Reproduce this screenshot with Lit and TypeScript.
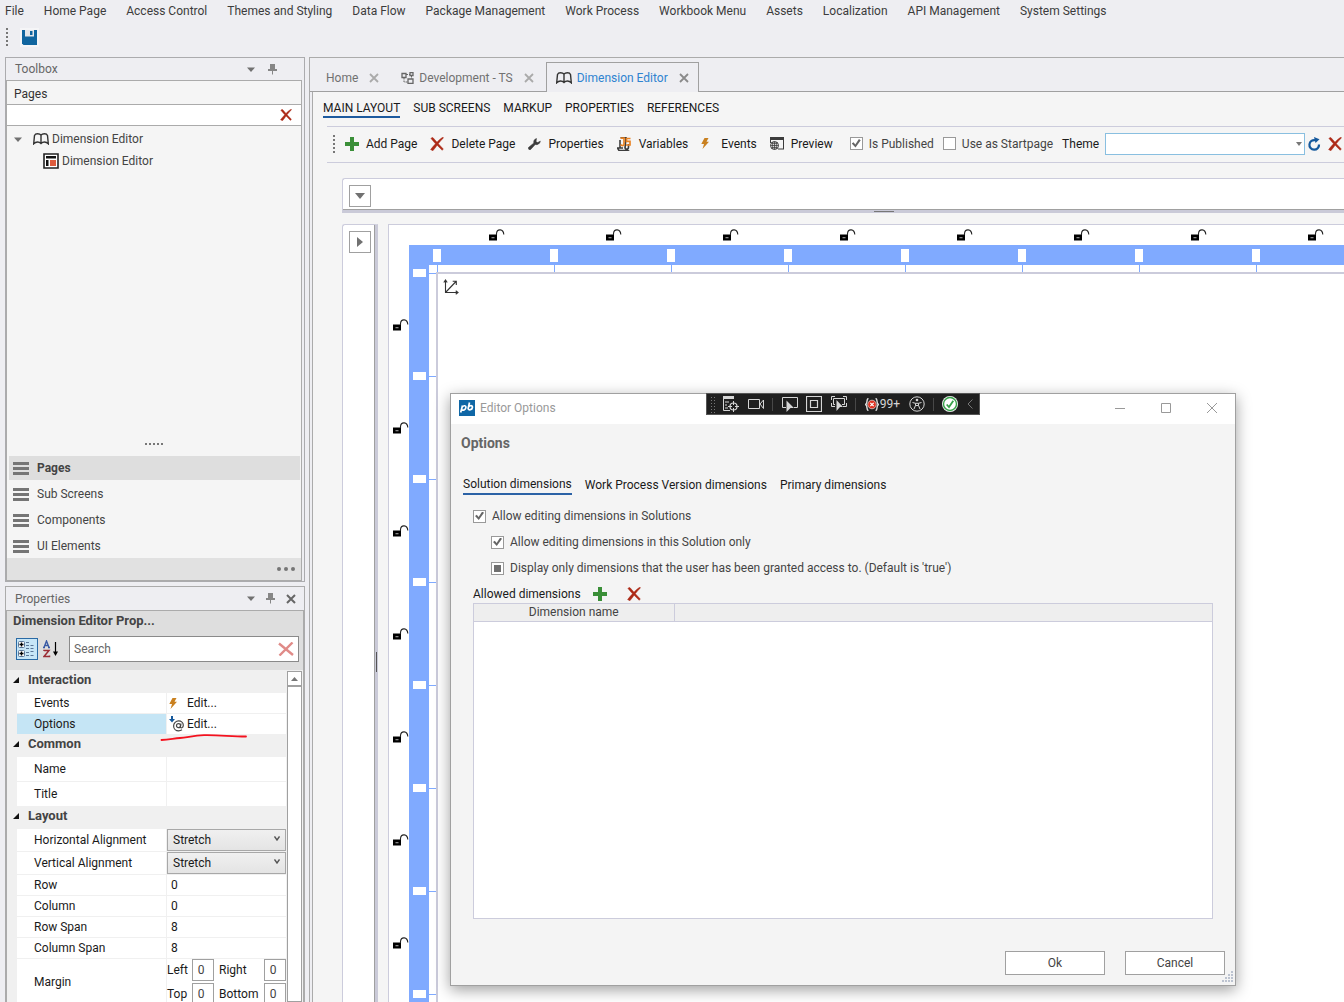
import { LitElement, html, css, svg, TemplateResult } from "lit";
import { customElement, state } from "lit/decorators.js";
import { classMap } from "lit/directives/class-map.js";

const icon = (w: number, h: number, body: TemplateResult | TemplateResult[]) =>
  html`<svg width=${w} height=${h} viewBox="0 0 ${w} ${h}" aria-hidden="true">${body}</svg>`;

const icons = {
  save: () => icon(15, 15, svg`<path d="M0 0H15V15H1.5L0 13.5Z" fill="#10659f"/><path d="M3 0H12V6.5H3Z" fill="#e3e6ea"/><path d="M8 1H10.500V5H8Z" fill="#10659f"/>`),
  caret: () => icon(8, 5, svg`<path d="M0 0.500H8L4 5Z" fill="#717171"/>`),
  pin: () => icon(9, 11, svg`<path d="M2 0H7V5H9V7H5V10.500H4V7H0V5H2Z" fill="#868686"/>`),
  cross: () => icon(10, 10, svg`<path d="M1 1L9 9M9 1L1 9" stroke="#666" stroke-width="2"/>`),
  tabCross: (c: string) => icon(10, 10, svg`<path d="M1 1L9 9M9 1L1 9" stroke=${c} stroke-width="1.800"/>`),
  red: (s: number) => html`<svg width=${s} height=${s} viewBox="0 0 14 14" aria-hidden="true"><path d="M1 1.500C1.500 0.500 2.700 0.300 3.300 1L7 5.200C9 3 11 1.200 13 0.300L13.500 0.900C11.500 2.700 9.700 4.600 8.300 6.700L13.300 12L12.200 13.300L7.100 8.200C5.800 10.100 4.400 12 2.900 13.700L0.600 12.600C2.200 10.500 3.800 8.600 5.500 6.800Z" fill="#ad2a17" stroke="#ad2a17" stroke-width="0.500"/></svg>`,
  pale: () => icon(16, 14, svg`<path d="M1 1.500L15 13M14.500 0.500L1.500 13.500" stroke="#e08b88" stroke-width="2.400"/>`),
  plus: () => icon(14, 14, svg`<path d="M5 0H9V5H14V9H9V14H5V9H0V5H5Z" fill="#3a8f38"/>`),
  book: (c = "#333") => icon(16, 12, svg`<path d="M8 10.500V2.200C7.200 1 5.800 0.700 4.500 0.700S2 1.200 1.500 2.400L0.700 10.800C1.800 9.600 3 9 4.500 9S7.200 9.600 8 10.500C8.800 9.600 10 9 11.500 9S14.200 9.600 15.300 10.800L14.500 2.400C14 1.200 12.800 0.700 11.500 0.700S8.800 1 8 2.200" fill="none" stroke=${c} stroke-width="1.400"/>`),
  page: () => icon(16, 16, svg`<path d="M1 1H15V15H1Z" fill="#fff" stroke="#222" stroke-width="1.600"/><path d="M3 3H13V5.500H3ZM3 7H5.500V13H3Z" fill="#111"/><path d="M7 7H13V13H7Z" fill="#dd5b3c"/>`),
  bars: () => icon(16, 13, svg`<path d="M0 0H16V3H0ZM0 5H16V8H0ZM0 10H16V13H0Z" fill="#757575"/>`),
  bolt: () => icon(8, 11, svg`<path d="M3.500 0H7.500L5.500 3.700H8L1.500 11L3 6H0.300Z" fill="#c9801f"/>`),
  flow: () => icon(13, 12, svg`<path d="M1 1.500H5V5.500H1ZM7 7H12V11.300H7ZM9 0.700H12V3.500H9Z" fill="none" stroke="#666" stroke-width="1.300"/><path d="M5 2.500H9M3 5.500V10H7M10.500 3.500V7" fill="none" stroke="#666" stroke-dasharray="2 1"/>`),
  wrench: () => icon(13, 12, svg`<path d="M8.500 0.600C6.500 1 5.300 3 5.900 5L0.500 9.500C-0.200 10.800 1.300 12.300 2.600 11.500L7.200 6.500C9.500 7.200 12 5.600 12.300 3.200L9.700 4.600L8 3.800L8.200 2Z" fill="#3c3c3c" stroke="#3c3c3c" stroke-width="0.600"/>`),
  js: () => icon(15, 14, svg`<path d="M3.500 0.500H9L8 11L11 13.500H2L0.500 11H6M3 3V11M8 10C8 13 11.500 13 11.500 10V7" fill="none" stroke="#3c3c3c" stroke-width="1.600"/><path d="M3.500 1.200H7V7.500C6.500 9 4.500 8.700 3.500 7.700M13.500 1.500H9.500V4.400H13V8H9" fill="none" stroke="#e98324" stroke-width="1.700"/>`),
  preview: () => icon(14, 13, svg`<path d="M0 0H14V12.500H8V11.500H13V3H1V6H0Z" fill="#3c3c3c"/><circle cx="4.500" cy="8.500" r="4" fill="#f5f5f5" stroke="#3c3c3c"/><path d="M0.500 8.500H8.500M4.500 4.500V12.500M1.500 6.300H7.500M1.500 10.600H7.500M2.700 5V12M6.300 5V12" stroke="#3c3c3c" stroke-width="0.800"/>`),
  refresh: () => icon(13, 14, svg`<path d="M11 7.500A4.800 4.800 0 1 1 7.300 3.200" fill="none" stroke="#15599c" stroke-width="2.200"/><path d="M6 0L11.500 2.200L7.500 6Z" fill="#15599c"/>`),
  lock: () => icon(16, 12, svg`<path d="M0 5.500H8V11.500H0Z" fill="#000"/><path d="M2.500 8H5.500V9.300H2.500Z" fill="#888"/><path d="M7.500 6V4.500C8 -0.500 14.500 -0.500 14.800 5.500" fill="none" stroke="#222" stroke-width="1.100"/>`),
  axes: () => icon(16, 16, svg`<path d="M2.500 1V13.500H15M2.500 13.500L13 2.500M0.800 3.500L2.500 1L4.200 3.500M12.700 11.700L15 13.500L12.700 15.200M9.700 2.300H13.300V6" fill="none" stroke="#333" stroke-width="1.100"/>`),
  at: () => html`<svg width="16" height="16" viewBox="0 0 16 16" aria-hidden="true"><path d="M2 0H4V3H6L3 6.500L0 3H2Z" fill="#15599c"/><circle cx="9.500" cy="9.700" r="2" fill="none" stroke="#444" stroke-width="1.200"/><path d="M12 7.500L11.400 11C11.500 12.600 14.300 12 14.300 9.300C14.300 6.700 12.200 4.900 9.600 4.900S4.600 7 4.600 9.900S7 14.800 9.700 14.800C11 14.800 12 14.400 13 13.800" fill="none" stroke="#444" stroke-width="1.200"/></svg>`,
  category: () => icon(18, 16, svg`<rect x="0.500" y="0.500" width="6" height="6" rx="1" fill="#fff" stroke="#5b7697"/><rect x="0.500" y="9.500" width="6" height="6" rx="1" fill="#fff" stroke="#5b7697"/><path d="M3.500 1.500V5.500M1.500 3.500H5.500M3.500 10.500V14.500M1.500 12.500H5.500" stroke="#000" stroke-width="1.400"/><path d="M8 1.500H11M8 4.500H11M8 7.500H11M8 11.500H11M8 14.500H11M12.500 4.500H15.500M12.500 7.500H15.500M12.500 10.500H15.500M12.500 14.500H15.500" stroke="#5b7697"/>`),
  sort: () => icon(16, 18, svg`<path d="M1 7.500L3.500 1L6 7.500M1.800 5.500H5.200M0 7.500H2M5 7.500H7" fill="none" stroke="#3a5ba5" stroke-width="1.400"/><path d="M1 11V10.500H6L1 16.500H6.500V15.500" fill="none" stroke="#9b2d35" stroke-width="1.500"/><path d="M12.500 2V14" stroke="#000" stroke-width="1.200"/><path d="M10 11.500H15L12.500 16Z"/>`),
  logo: () => icon(16, 16, svg`<path d="M0 0H16V16H0Z" fill="#0f67a6"/><path d="M1.700 12.500L3.500 5.500M3.200 7C4.800 5 7.300 5.500 6.900 7.700C6.500 10 4 10.800 2.600 9.500M10.500 2.500L9 9M9.300 7.500C10.500 5 13.800 5 13.400 7.500C13 10 10 10.300 9 9" fill="none" stroke="#fff" stroke-width="1.700"/>`),
};

const MENU = ["File", "Home Page", "Access Control", "Themes and Styling", "Data Flow", "Package Management", "Work Process",
  "Workbook Menu", "Assets", "Localization", "API Management", "System Settings"];
const VIEWS = ["MAIN LAYOUT", "SUB SCREENS", "MARKUP", "PROPERTIES", "REFERENCES"];
const GROUPS = ["Pages", "Sub Screens", "Components", "UI Elements"];
const DIALOG_TABS = ["Solution dimensions", "Work Process Version dimensions", "Primary dimensions"];
const COLUMNS = Array.from({ length: 8 }, (_, i) => i);
const ROWS = Array.from({ length: 8 }, (_, i) => i);

const base = css`
  *, *::before, *::after { box-sizing: border-box; }
  button, input, select { font: inherit; color: inherit; margin: 0; padding: 0; border: 0; background: none; border-radius: 0; }
  button { display: inline-flex; align-items: center; cursor: default; white-space: nowrap; }
  a { color: inherit; text-decoration: none; white-space: nowrap; }
  svg { display: block; flex: none; }
  h2, h3 { margin: 0; font-size: 13px; font-weight: 700; }
  input:focus, select:focus { outline: none; }
  .check { display: flex; align-items: center; gap: 6px; color: #444; white-space: nowrap; }
  .check input { appearance: none; flex: none; width: 13px; height: 13px; border: 1px solid #999; background: #fff; display: grid; place-items: center; }
  .check input:checked::before { content: ""; width: 9px; height: 9px; background: #666; clip-path: polygon(0 50%, 20% 35%, 40% 60%, 80% 0, 100% 15%, 42% 95%); }
  .check input:indeterminate::before { content: ""; width: 7px; height: 7px; background: #707070; }
  .grip { flex: none; width: 2px; background: repeating-linear-gradient(#777 0 2px, transparent 2px 4px); }
`;

@customElement("toolbox-panel")
class ToolboxPanel extends LitElement {
  @state() private active = "Pages";

  static styles = [base, css`
    :host { display: flex; flex-direction: column; border: 1px solid #ababae; height: 525px; padding-right: 2px; background: #eeeef2; }
    .head { display: flex; align-items: center; height: 22px; padding: 0 25px 0 9px; gap: 13px; color: #666; }
    .head span { flex: 1; }
    .body { flex: 1; display: flex; flex-direction: column; border: 1px solid #ababab; background: #f5f5f5; }
    .title { height: 24px; padding: 0 7px; line-height: 26px; border-bottom: 1px solid #ababab; color: #333; }
    .find { display: flex; align-items: center; height: 21px; background: #fff; border-bottom: 1px solid #ababab; padding-right: 9px; }
    .find input { flex: 1; min-width: 0; height: 100%; padding: 0 6px; }
    .tree { flex: 1; padding: 2px 0 0 7px; color: #444; }
    .node { display: flex; align-items: center; height: 22px; gap: 3px; }
    .node button { width: 16px; height: 16px; }
    .child { padding-left: 29px; }
    .dots { align-self: center; height: 2px; width: 18px; margin-bottom: 11px; background: repeating-linear-gradient(90deg, #777 0 2px, transparent 2px 4px); }
    .groups { display: flex; flex-direction: column; gap: 2px; padding: 0 1px 0 2px; }
    .group { height: 24px; gap: 8px; padding-left: 4px; color: #444; }
    .group.on { background: #dedede; font-weight: 700; }
    .foot { height: 22px; background: #e1e1e1; display: flex; justify-content: flex-end; align-items: center; padding-right: 6px; }
  `];

  render() {
    return html`
      <div class="head"><span>Toolbox</span><button aria-label="Toolbox options">${icons.caret()}</button><button aria-label="Pin toolbox">${icons.pin()}</button></div>
      <div class="body">
        <label class="title" for="find">Pages</label>
        <div class="find"><input id="find" type="text"><button aria-label="Clear filter">${icons.red(12)}</button></div>
        <div class="tree">
          <div class="node"><button aria-label="Collapse">${icons.caret()}</button>${icons.book()}<span>Dimension Editor</span></div>
          <div class="node child">${icons.page()}<span>Dimension Editor</span></div>
        </div>
        <div class="dots"></div>
        <div class="groups">
          ${GROUPS.map((g) => html`<button class=${classMap({ group: true, on: g === this.active })} @click=${() => (this.active = g)}>${icons.bars()}${g}</button>`)}
        </div>
        <div class="foot"><button aria-label="More">${icon(18, 4, svg`<circle cx="2" cy="2" r="2" fill="#757575"/><circle cx="9" cy="2" r="2" fill="#757575"/><circle cx="16" cy="2" r="2" fill="#757575"/>`)}</button></div>
      </div>`;
  }
}

@customElement("property-panel")
class PropertyPanel extends LitElement {
  static styles = [base, css`
    :host { display: flex; flex-direction: column; flex: 1; min-height: 0; overflow: hidden; border: 1px solid #ababab; border-bottom: 0; background: #eeeef2; color: #1a1a1a; }
    .head { flex: none; display: flex; align-items: center; height: 23px; padding: 0 8px 0 9px; gap: 11px; color: #666; }
    .head span { flex: 1; }
    .body { flex: 1; min-height: 0; border: 1px solid #ababab; border-bottom: 0; background: #dedede; display: flex; flex-direction: column; overflow: hidden; }
    h2 { flex: none; height: 22px; line-height: 20px; padding-left: 6px; color: #444; }
    .tools { flex: none; display: flex; align-items: center; height: 37px; padding: 0 4px 5px 9px; gap: 2px; }
    .mode { width: 22px; height: 22px; justify-content: center; }
    .mode.on { border: 1px solid #2a6aa5; background: #c7e6f7; }
    .search { flex: 1; display: flex; align-items: center; height: 26px; margin-left: 5px; background: #fff; border: 1px solid #8a8a8a; padding: 0 4px; }
    .search input { flex: 1; min-width: 0; }
    .search input::placeholder { color: #666; opacity: 1; }
    .view { flex: 1; display: flex; min-height: 0; background: #f0f0f0; overflow: hidden; }
    .grid { flex: 1; min-width: 0; }
    h3 { display: flex; align-items: center; height: 23px; gap: 9px; padding: 0 0 4px 6px; color: #444; }
    .rows { display: flex; flex-direction: column; gap: 1px; padding-left: 10px; }
    .row { display: grid; grid-template-columns: 149px 1fr; gap: 1px; min-height: 20px; }
    .row.tall { min-height: 24px; }
    .row.pick { min-height: 22px; }
    .row > label, .row > .name { background: #fff; padding-left: 17px; display: flex; align-items: center; }
    .row.on > .name { background: #c5e5f5; }
    .cell { background: #fff; display: flex; align-items: center; min-width: 0; }
    .cell > input { width: 100%; height: 100%; padding-left: 4px; }
    .edit { gap: 10px; padding-left: 2px; height: 100%; }
    .edit.near { gap: 2px; }
    .pick .cell { display: grid; align-items: center; }
    select { appearance: none; grid-area: 1/1; width: 100%; height: 22px; padding-left: 5px; border: 1px solid #a8a8a8; background: linear-gradient(#f0f0f0, #e4e4e4); }
    .pick svg { grid-area: 1/1; justify-self: end; margin: 0 6px 4px 0; pointer-events: none; }
    .margins { background: #fff; display: grid; grid-template-columns: 25px 22px 50px 22px; row-gap: 2px; align-items: center; }
    .margins input { width: 22px; height: 22px; text-align: center; border: 1px solid #a0a0a0; color: #444; padding-right: 4px; }
    .margins label:nth-of-type(even) { padding-left: 5px; }
    .bar { flex: none; width: 15px; margin: 1px 1px 0 1px; display: flex; flex-direction: column; }
    .bar button { height: 15px; border: 1px solid #a0a0a0; background: #fff; justify-content: center; }
    .bar div { flex: 1; border: 1px solid #a0a0a0; background: #fff; }
  `];

  private section(title: string, body: TemplateResult | TemplateResult[]) {
    return html`<h3>${icon(6, 6, svg`<path d="M6 0V6H0Z" fill="#111"/>`)}${title}</h3><div class="rows">${body}</div>`;
  }

  private text(name: string, value: string, tall = false) {
    const id = name.replace(" ", "-");
    return html`<div class=${classMap({ row: true, tall })}><label for=${id}>${name}</label><div class="cell"><input id=${id} type="text" .value=${value}></div></div>`;
  }

  private pick(name: string) {
    const id = name.replace(" ", "-");
    return html`<div class="row pick"><label for=${id}>${name}</label><div class="cell"><select id=${id}><option>Stretch</option><option>Left</option><option>Center</option></select>${icon(6, 5, svg`<path d="M0.500 0.500L3 4L5.500 0.500" fill="none" stroke="#555" stroke-width="1.400"/>`)}</div></div>`;
  }

  render() {
    return html`
      <div class="head"><span>Properties</span><button aria-label="Properties options">${icons.caret()}</button><button aria-label="Pin properties">${icons.pin()}</button><button aria-label="Close properties">${icons.cross()}</button></div>
      <div class="body">
        <h2>Dimension Editor Prop...</h2>
        <div class="tools">
          <button class="mode on" aria-label="Group by category">${icons.category()}</button>
          <button class="mode" aria-label="Sort by name">${icons.sort()}</button>
          <div class="search"><input type="text" aria-label="Search" placeholder="Search"><button aria-label="Clear search">${icons.pale()}</button></div>
        </div>
        <div class="view">
          <div class="grid">
            ${this.section("Interaction", html`
              <div class="row"><span class="name">Events</span><div class="cell"><button class="edit">${icons.bolt()}Edit...</button></div></div>
              <div class="row on"><span class="name">Options</span><div class="cell"><button class="edit near">${icons.at()}Edit...</button></div></div>`)}
            ${this.section("Common", [this.text("Name", "", true), this.text("Title", "", true)])}
            ${this.section("Layout", html`
              ${this.pick("Horizontal Alignment")}${this.pick("Vertical Alignment")}
              ${this.text("Row", "0")}${this.text("Column", "0")}${this.text("Row Span", "8")}${this.text("Column Span", "8")}
              <div class="row"><span class="name">Margin</span><div class="margins">
                ${["Left", "Right", "Top", "Bottom"].map((m) => html`<label for=${m}>${m}</label><input id=${m} type="text" .value=${"0"}>`)}
              </div></div>`)}
          </div>
          <div class="bar"><button aria-label="Scroll up">${icon(7, 4, svg`<path d="M0 4L3.500 0L7 4Z" fill="#777"/>`)}</button><div></div></div>
        </div>
      </div>`;
  }
}

@customElement("layout-document")
class LayoutDocument extends LitElement {
  @state() private view = VIEWS[0];

  static styles = [base, css`
    :host { display: flex; flex-direction: column; min-width: 0; min-height: 0; overflow: hidden; border: 1px solid #ababab; border-right: 0; border-bottom: 0; color: #1a1a1a; }
    .tabs { flex: none; display: flex; align-items: flex-end; height: 34px; padding-left: 4px; border-bottom: 1px solid #a0a0a0; }
    .tab { display: flex; align-items: center; height: 30px; color: #717171; gap: 5px; padding: 0 11px 0 11px; border: 1px solid transparent; border-bottom: 0; margin-bottom: -1px; white-space: nowrap; }
    .tab + .tab { padding-left: 9px; }
    .tab button { margin-left: 6px; }
    .tab.on { border-color: #a0a0a0; background: #eeeef2; color: #2f83d0; padding: 0 9px; }
    .page { flex: 1; min-height: 0; display: flex; flex-direction: column; margin-left: 2px; border-left: 1px solid #ababab; background: #f5f5f5; }
    .views { flex: none; display: flex; gap: 13px; padding: 8px 0 8px 10px; }
    .views a { height: 18px; line-height: 16px; }
    .views a.on { border-bottom: 2px solid #1d5a9e; }
    .bar { flex: none; display: flex; align-items: center; height: 37px; margin-left: 14px; padding: 0 0 2px 6px; border: 1px solid #ccccdc; border-width: 1px 0; white-space: nowrap; }
    .bar button { gap: 7px; margin-right: 13px; }
    .bar .events { gap: 12px; }
    .bar .grip { height: 18px; margin-right: 10px; }
    .bar .check { margin-right: 9px; }
    .bar .preview { margin-right: 17px; }
    .combo { display: grid; align-items: center; flex: none; width: 200px; height: 22px; margin: 0 3px 0 6px; }
    .combo select { grid-area: 1/1; appearance: none; width: 100%; height: 22px; border: 1px solid #89bfe0; background: #fff; }
    .combo svg { grid-area: 1/1; justify-self: end; margin-right: 3px; pointer-events: none; }
    .bar .combo ~ button { margin-right: 7px; }
    .stage { flex: 1; min-height: 0; display: grid; grid-template-columns: 36px 1fr; grid-template-rows: 35px 1fr; gap: 11px 10px; padding: 15px 0 0 29px; }
    .top { grid-column: 1 / -1; background: #fff; border: 1px solid #ccccdc; border-right: 0; border-bottom: 3px solid #cacad8; box-shadow: inset 0 -1px #a0a0a0; border-top-left-radius: 3px; padding: 6px; position: relative; }
    .side { background: #fff; border: 1px solid #ccccdc; border-bottom: 0; border-right: 3px solid #cacad8; box-shadow: inset -1px 0 #a0a0a0; border-top-left-radius: 3px; padding: 6px; position: relative; }
    .fold { width: 22px; height: 22px; border: 1px solid #a0a0a0; background: #fff; justify-content: center; }
    .top::after { content: ""; position: absolute; left: 53%; bottom: -2px; width: 20px; height: 1px; background: #777; }
    .side::after { content: ""; position: absolute; top: 55%; right: -2px; width: 1px; height: 20px; background: #555; }
    .canvas { min-width: 0; min-height: 0; overflow: hidden; background: #fff; border: 1px solid #ccccdc; border-right: 0; border-bottom: 0; display: grid; grid-template-columns: 20px 20px 7px 1fr; grid-template-rows: 20px 20px 7px 1fr; }
    .canvas > div { min-width: 0; min-height: 0; overflow: hidden; }
    .locks-x { grid-area: 1 / 4; display: flex; align-items: center; padding-left: 2px; }
    .locks-x span { flex: none; width: 117px; display: flex; justify-content: center; }
    .locks-y { grid-area: 4 / 1; display: flex; flex-direction: column; padding-top: 1px; }
    .locks-y span { flex: none; height: 103px; display: flex; align-items: center; justify-content: flex-end; }
    .band-x { grid-area: 2 / 2 / auto / 5; background: #80aaff; display: flex; align-items: center; padding-left: 24px; }
    .band-x i { flex: none; width: 8px; height: 13px; background: #fff; margin-right: 109px; }
    .band-y { grid-area: 3 / 2 / 5 / auto; background: #80aaff; display: flex; flex-direction: column; align-items: center; padding-top: 4px; }
    .band-y i { flex: none; width: 13px; height: 8px; background: #fff; margin-bottom: 95px; }
    .ruler-x { grid-area: 3 / 4; background: repeating-linear-gradient(90deg, #80aaff 0 1px, transparent 1px 117px); margin-left: 1px; }
    .ruler-y { grid-area: 4 / 3; background: repeating-linear-gradient(#80aaff 0 1px, transparent 1px 103px); margin-top: 1px; }
    .surface { grid-area: 4 / 4; border: 2px solid #cbcbdb; border-right: 0; border-bottom: 0; padding: 5px; }
  `];

  render() {
    return html`
      <div class="tabs">
        <div class="tab"><a href="#home">Home</a><button aria-label="Close Home">${icons.tabCross("#aaa")}</button></div>
        <div class="tab">${icons.flow()}<a href="#development">Development - TS</a><button aria-label="Close Development - TS">${icons.tabCross("#aaa")}</button></div>
        <div class="tab on">${icons.book()}<a href="#editor">Dimension Editor</a><button aria-label="Close Dimension Editor">${icons.tabCross("#8a8a8a")}</button></div>
      </div>
      <div class="page">
        <nav class="views">${VIEWS.map((v) => html`<a href="#" class=${v === this.view ? "on" : ""} @click=${(e: Event) => { e.preventDefault(); this.view = v; }}>${v}</a>`)}</nav>
        <div class="bar">
          <span class="grip"></span>
          <button>${icons.plus()}Add Page</button>
          <button>${icons.red(14)}Delete Page</button>
          <button>${icons.wrench()}Properties</button>
          <button>${icons.js()}Variables</button>
          <button class="events">${icons.bolt()}Events</button>
          <button class="preview">${icons.preview()}Preview</button>
          <label class="check"><input type="checkbox" checked>Is Published</label>
          <label class="check"><input type="checkbox">Use as Startpage</label>
          <label for="theme">Theme</label>
          <div class="combo"><select id="theme"><option></option></select>${icon(6, 4, svg`<path d="M0 0H6L3 4Z" fill="#777"/>`)}</div>
          <button aria-label="Refresh themes">${icons.refresh()}</button>
          <button aria-label="Clear theme">${icons.red(14)}</button>
        </div>
        <div class="stage">
          <div class="top"><button class="fold" aria-label="Expand top panel">${icon(10, 6, svg`<path d="M0 0H10L5 6Z" fill="#717171"/>`)}</button></div>
          <div class="side"><button class="fold" aria-label="Expand side panel">${icon(6, 10, svg`<path d="M0 0V10L6 5Z" fill="#717171"/>`)}</button></div>
          <div class="canvas">
            <div class="locks-x">${COLUMNS.map(() => html`<span>${icons.lock()}</span>`)}</div>
            <div class="band-x">${COLUMNS.map(() => html`<i></i>`)}</div>
            <div class="ruler-x"></div>
            <div class="locks-y">${ROWS.map(() => html`<span>${icons.lock()}</span>`)}</div>
            <div class="band-y">${ROWS.map(() => html`<i></i>`)}</div>
            <div class="ruler-y"></div>
            <div class="surface">${icons.axes()}</div>
          </div>
        </div>
      </div>`;
  }
}

@customElement("debug-strip")
class DebugStrip extends LitElement {
  static styles = [base, css`
    :host { display: flex; align-items: center; justify-content: space-between; height: 22px; padding: 0 6px 0 3px; background: #1f1f1f; border: 1px solid #555; color: #d6d6d6; }
    .grab { width: 5px; height: 17px; background: radial-gradient(circle, #777 0 1px, transparent 1px) 0 0 / 3px 3px; }
    i { width: 1px; height: 13px; background: #484848; }
    .errors { gap: 1px; }
  `];

  render() {
    return html`
      <span class="grab"></span>
      <button aria-label="Live visual tree">${icon(16, 16, svg`<path d="M0 0H11V3H0Z" fill="#d6d6d6"/><path d="M0.500 3V14.500H7M2 6H6M2 9H4M2 12H5" stroke="#d6d6d6" fill="none"/><circle cx="10.500" cy="10.500" r="3.500" fill="none" stroke="#d6d6d6" stroke-width="1.200"/><path d="M10.500 5V9M10.500 12V16M5 10.500H9M12 10.500H16" stroke="#d6d6d6"/>`)}</button>
      <button aria-label="Record">${icon(16, 10, svg`<path d="M0.500 0.500H11.500V9.500H0.500ZM12 5L15.500 1V9.500Z" fill="none" stroke="#d6d6d6"/>`)}</button>
      <i></i>
      <button aria-label="Select element">${icon(16, 15, svg`<path d="M4 10.500H0.500V0.500H15.500V10.500H12" fill="none" stroke="#d6d6d6"/><path d="M4.500 3.500L12 11H8.500L4.500 15Z" fill="#d6d6d6"/>`)}</button>
      <button aria-label="Show adorners">${icon(16, 16, svg`<path d="M0.500 0.500H15.500V15.500H0.500ZM4.500 4.500H11.500V11.500H4.500Z" fill="none" stroke="#d6d6d6" stroke-width="1.200"/>`)}</button>
      <button aria-label="Track focus">${icon(16, 16, svg`<path d="M0.500 4V0.500H4M12 0.500H15.500V4M15.500 7V10.500H12M4 10.500H0.500V7M4 8.500H2.500V2.500H13.500V8.500H11" fill="none" stroke="#d6d6d6"/><path d="M5.500 4L12 11H9L5.500 15Z" fill="#d6d6d6"/>`)}</button>
      <i></i>
      <button class="errors" aria-label="Binding failures">${icon(14, 13, svg`<path d="M3.500 0.500C1 0.500 3 5.500 0.500 6.500C3 7.500 1 12.500 3.500 12.500M10.500 0.500C13 0.500 11 5.500 13.500 6.500C11 7.500 13 12.500 10.500 12.500" fill="none" stroke="#ddd" stroke-width="1.400"/><circle cx="7" cy="6.500" r="4.300" fill="#e03424" stroke="#fff" stroke-width="0.600"/><path d="M5.300 4.800L8.700 8.200M8.700 4.800L5.300 8.200" stroke="#fff" stroke-width="1.200"/>`)}99+</button>
      <button aria-label="Accessibility">${icon(16, 16, svg`<circle cx="8" cy="8" r="7.200" fill="none" stroke="#d6d6d6"/><circle cx="8" cy="4" r="1.300" fill="#d6d6d6"/><path d="M3.500 6.500L6.500 7.300V9.500L5 13M12.500 6.500L9.500 7.300V9.500L11 13M6.500 7.300H9.500M6.500 9.500H9.500" fill="none" stroke="#d6d6d6"/>`)}</button>
      <i></i>
      <button aria-label="Hot reload">${icon(16, 16, svg`<circle cx="8" cy="8" r="8" fill="#f4f4f4"/><circle cx="8" cy="8" r="6.500" fill="#fff" stroke="#37a24a" stroke-width="1.400"/><path d="M4.700 8.500L7 11L11.300 4.700" fill="none" stroke="#37a24a" stroke-width="1.800"/>`)}</button>
      <button aria-label="Collapse toolbar">${icon(6, 10, svg`<path d="M5.500 0.500L1 5L5.500 9.500" fill="none" stroke="#777"/>`)}</button>`;
  }
}

@customElement("options-dialog")
class OptionsDialog extends LitElement {
  @state() private tab = DIALOG_TABS[0];

  static styles = [base, css`
    :host { display: flex; flex-direction: column; background: #f4f4f4; border: 1px solid #a0a0a0; box-shadow: 0 4px 14px rgb(0 0 0 / 38%); color: #1a1a1a; }
    .title { display: flex; align-items: center; height: 30px; padding: 0 18px 2px 8px; gap: 5px; background: #fff; color: #999; }
    .title span { flex: 1; }
    .title button { margin-left: 31px; }
    .content { flex: 1; display: flex; flex-direction: column; padding: 12px 22px 0; }
    h2 { margin-left: -12px; height: 15px; font-size: 14px; line-height: 15px; color: #666; }
    .tabs { display: flex; gap: 13px; margin: 24px 0 8px -10px; }
    .tabs a { height: 20px; line-height: 20px; }
    .tabs a.on { height: 20px; line-height: 19px; border-bottom: 2px solid #2b62a6; }
    .check { height: 26px; }
    .sub { margin-left: 18px; }
    .bar { display: flex; align-items: center; height: 22px; padding-top: 4px; gap: 12px; }
    .bar button { width: 22px; height: 18px; }
    .list { flex: 1; background: #fff; border: 1px solid #ccccdc; margin-bottom: 32px; }
    table { width: 100%; border-collapse: collapse; table-layout: fixed; }
    th { height: 17px; padding: 0; font-weight: 400; color: #444; background: #eee; border-bottom: 1px solid #ccccdc; }
    th + th { border-left: 1px solid #ccccdc; }
    .name { width: 200px; }
    .actions { display: flex; justify-content: flex-end; gap: 20px; margin: 0 -12px 10px 0; }
    .actions button { width: 100px; height: 24px; justify-content: center; background: #fff; border: 1px solid #a0a0a0; color: #444; }
    .size { position: absolute; right: 2px; bottom: 2px; }
    .strip { position: absolute; top: -1px; left: 255px; width: 274px; }
  `];

  render() {
    return html`
      <div class="title">${icons.logo()}<span>Editor Options</span>
        <button aria-label="Minimize">${icon(10, 10, svg`<path d="M0 5.500H10" stroke="#999"/>`)}</button>
        <button aria-label="Maximize">${icon(10, 10, svg`<path d="M0.500 0.500H9.500V9.500H0.500Z" fill="none" stroke="#999"/>`)}</button>
        <button aria-label="Close">${icon(10, 10, svg`<path d="M0 0L10 10M10 0L0 10" stroke="#999"/>`)}</button>
      </div>
      <div class="content">
        <h2>Options</h2>
        <nav class="tabs">${DIALOG_TABS.map((t) => html`<a href="#" class=${t === this.tab ? "on" : ""} @click=${(e: Event) => { e.preventDefault(); this.tab = t; }}>${t}</a>`)}</nav>
        <label class="check"><input type="checkbox" checked>Allow editing dimensions in Solutions</label>
        <label class="check sub"><input type="checkbox" checked>Allow editing dimensions in this Solution only</label>
        <label class="check sub"><input type="checkbox" .indeterminate=${true}>Display only dimensions that the user has been granted access to. (Default is 'true')</label>
        <div class="bar"><span>Allowed dimensions</span><button aria-label="Add dimension">${icons.plus()}</button><button aria-label="Remove dimension">${icons.red(14)}</button></div>
        <div class="list"><table><thead><tr><th class="name" scope="col">Dimension name</th><th></th></tr></thead><tbody></tbody></table></div>
        <div class="actions"><button>Ok</button><button>Cancel</button></div>
      </div>
      <svg class="size" width="12" height="12" viewBox="0 0 12 12" aria-hidden="true"><path d="M10 0H12V2H10ZM7 3H9V5H7ZM10 3H12V5H10ZM4 6H6V8H4ZM7 6H9V8H7ZM10 6H12V8H10ZM1 9H3V11H1ZM4 9H6V11H4ZM7 9H9V11H7ZM10 9H12V11H10Z" fill="#bcc3d0"/></svg>
      <debug-strip class="strip"></debug-strip>`;
  }
}

@customElement("app-root")
class AppRoot extends LitElement {
  static styles = [base, css`
    :host { display: flex; flex-direction: column; height: 100vh; overflow: hidden; position: relative; background: #eeeef2; font: 12px/16px Roboto, "Open Sans", sans-serif; color: #333; }
    .menu { flex: none; display: flex; gap: 20px; padding: 3px 5px; height: 24px; color: #3c3c3c; }
    .toolbar { flex: none; display: flex; align-items: center; height: 33px; padding: 0 6px 6px; gap: 12px; }
    .toolbar .grip { height: 20px; }
    .save { padding: 2px; background: #f5f5f7; }
    .work { flex: 1; min-height: 0; display: grid; grid-template-columns: 300px 1fr; gap: 4px; padding-left: 5px; }
    .left { display: flex; flex-direction: column; gap: 4px; min-height: 0; }
    .dialog { position: absolute; left: 450px; top: 393px; width: 786px; height: 593px; }
    .stroke { position: absolute; left: 160px; top: 732px; pointer-events: none; }
  `];

  render() {
    return html`
      <nav class="menu">${MENU.map((m) => html`<a href="#">${m}</a>`)}</nav>
      <div class="toolbar"><span class="grip"></span><button class="save" aria-label="Save">${icons.save()}</button></div>
      <div class="work">
        <div class="left"><toolbox-panel></toolbox-panel><property-panel></property-panel></div>
        <layout-document></layout-document>
      </div>
      <options-dialog class="dialog" role="dialog" aria-label="Editor Options"></options-dialog>
      <svg class="stroke" width="88" height="10" viewBox="0 0 88 10" aria-hidden="true"><path d="M1.500 8C9 7.500 14 6.500 20 6C27 5.700 33 3.500 44 3.200C60 2.900 70 4.500 86 4.500" fill="none" stroke="#f4121f" stroke-width="1.800" stroke-linecap="round"/></svg>`;
  }
}
